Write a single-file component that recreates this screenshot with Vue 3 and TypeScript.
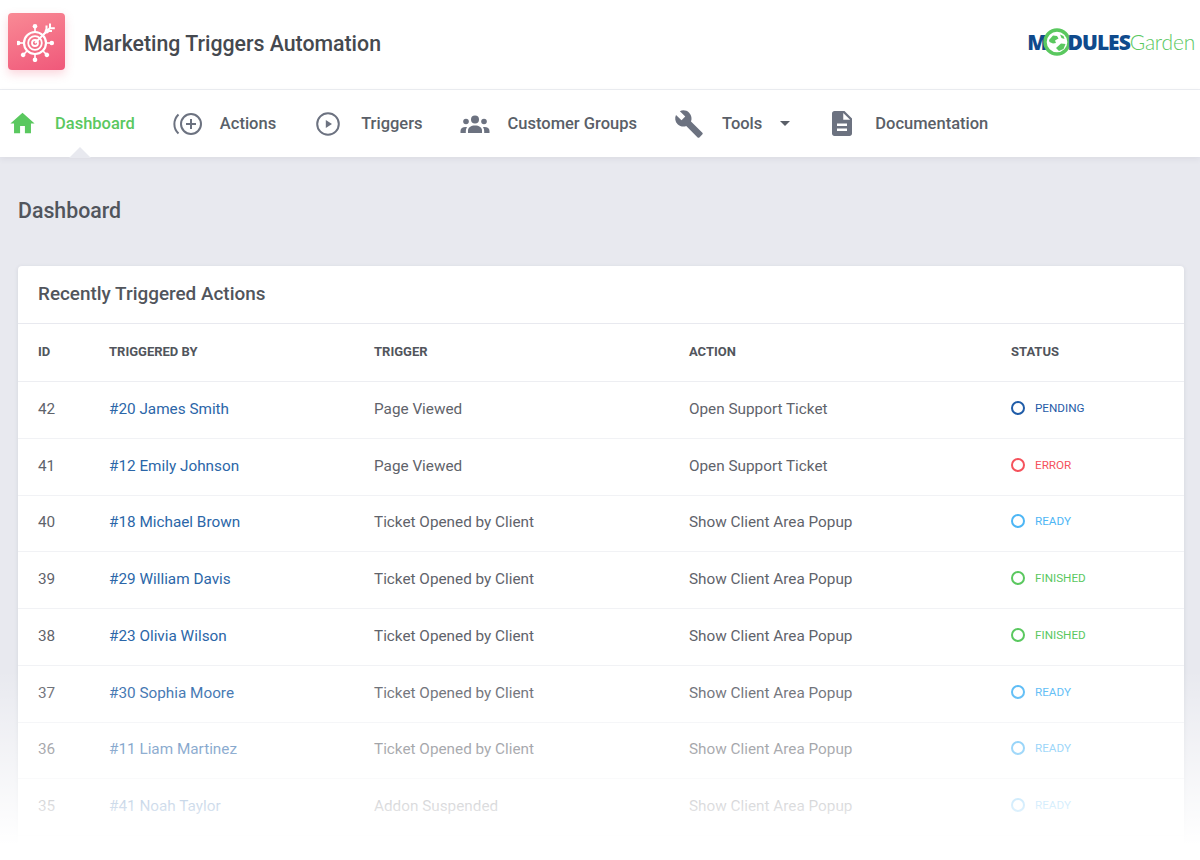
<script setup lang="ts">
interface Row {
  id: number
  by: string
  trigger: string
  action: string
  status: 'pending' | 'error' | 'ready' | 'finished'
}

const menu = [
  { label: 'Dashboard', icon: 'home', active: true },
  { label: 'Actions', icon: 'actions' },
  { label: 'Triggers', icon: 'play' },
  { label: 'Customer Groups', icon: 'groups' },
  { label: 'Tools', icon: 'wrench', caret: true },
  { label: 'Documentation', icon: 'doc' },
]

const rows: Row[] = [
  { id: 42, by: '#20 James Smith', trigger: 'Page Viewed', action: 'Open Support Ticket', status: 'pending' },
  { id: 41, by: '#12 Emily Johnson', trigger: 'Page Viewed', action: 'Open Support Ticket', status: 'error' },
  { id: 40, by: '#18 Michael Brown', trigger: 'Ticket Opened by Client', action: 'Show Client Area Popup', status: 'ready' },
  { id: 39, by: '#29 William Davis', trigger: 'Ticket Opened by Client', action: 'Show Client Area Popup', status: 'finished' },
  { id: 38, by: '#23 Olivia Wilson', trigger: 'Ticket Opened by Client', action: 'Show Client Area Popup', status: 'finished' },
  { id: 37, by: '#30 Sophia Moore', trigger: 'Ticket Opened by Client', action: 'Show Client Area Popup', status: 'ready' },
  { id: 36, by: '#11 Liam Martinez', trigger: 'Ticket Opened by Client', action: 'Show Client Area Popup', status: 'ready' },
  { id: 35, by: '#41 Noah Taylor', trigger: 'Addon Suspended', action: 'Show Client Area Popup', status: 'ready' },
]

// spokes of the target logo, angle in degrees
const spokes = [0, 45, 90, 135, 180, 225, 270]
</script>

<template>
  <div class="page">
    <header class="top">
      <div class="brand">
        <div class="brand-icon">
          <svg viewBox="0 0 40 40" width="40" height="40" fill="none" stroke="#fff">
            <circle cx="18" cy="21" r="11" stroke-width="2.200" />
            <circle cx="18" cy="21" r="6.800" stroke-width="1.800" />
            <circle cx="18" cy="21" r="3" stroke-width="1.800" />
            <g v-for="a in spokes" :key="a" :transform="`rotate(${a} 18 21)`">
              <line x1="18" y1="10" x2="18" y2="5" stroke-width="1.600" />
              <circle cx="18" cy="4.200" r="2.300" fill="#fff" stroke="none" />
            </g>
            <path d="M18 21L33 6" stroke-width="2" />
            <path d="M29.500 3.500v5.500h5.500M33 1.500v4.800h4.800" stroke-width="2" />
          </svg>
        </div>
        <h1>Marketing Triggers Automation</h1>
      </div>
      <div class="mg-logo" aria-label="ModulesGarden">
        <span class="mg-bold">M</span>
        <svg class="mg-globe" viewBox="0 0 28 28" width="28" height="28">
          <circle cx="14" cy="14" r="12" fill="#fff" stroke="#5ac85f" stroke-width="3.400" />
          <path d="M6 12l4-4.500 4 .5 1.500 2.500-3.500 2 1 2.500-3 .5-3.500-1.500zM13 20l5-4.500 4.500 .5-2 5-4.500 2zM17 6.500l3.500 1.500 1 3-3-1z" fill="#5ac85f" />
        </svg>
        <span class="mg-bold">DULES</span><span class="mg-light">Garden</span>
      </div>
    </header>

    <nav class="menu">
      <a v-for="m in menu" :key="m.label" class="menu-item" :class="{ active: m.active }">
        <span class="menu-icon">
          <svg v-if="m.icon === 'home'" viewBox="0 0 24 24" width="29" height="29" fill="#5ac85f">
            <path d="M10 20v-6h4v6h5v-8h3L12 3 2 12h3v8z" />
          </svg>
          <svg v-else-if="m.icon === 'actions'" viewBox="0 0 30 24" width="30" height="24" fill="none" stroke="#6c7280" stroke-width="2">
            <circle cx="19" cy="12" r="10" />
            <path d="M14 12h10M19 7v10" />
            <path d="M6.500 2.500a13 13 0 0 0 0 19" />
          </svg>
          <svg v-else-if="m.icon === 'play'" viewBox="0 0 24 24" width="24" height="24" fill="none" stroke="#6c7280" stroke-width="2">
            <circle cx="12" cy="12" r="10.800" />
            <path d="M9.800 8l6.200 4-6.200 4z" fill="#6c7280" stroke="none" />
          </svg>
          <svg v-else-if="m.icon === 'groups'" viewBox="0 0 30 20" width="30" height="20" fill="#6c7280">
            <circle cx="15" cy="5.500" r="4" />
            <circle cx="6" cy="7.500" r="2.800" />
            <circle cx="24" cy="7.500" r="2.800" />
            <path d="M8 19v-2.500c0-3 3-5 7-5s7 2 7 5V19z" />
            <path d="M.5 19v-2c0-2.500 2-4 5-4 .6 0 1 0 1.500.2-.8 1-1.200 2.300-1.200 3.800v2zM29.500 19v-2c0-2.500-2-4-5-4-.6 0-1 0-1.500.2.800 1 1.200 2.300 1.200 3.800v2z" />
          </svg>
          <svg v-else-if="m.icon === 'wrench'" viewBox="0 0 24 24" width="32" height="32" fill="#6c7280">
            <path d="M22.700 19l-9.100-9.100c.9-2.300.4-5-1.500-6.900-2-2-5-2.400-7.400-1.300L9 6 6 9 1.600 4.700C.4 7.100.9 10.100 2.900 12.100c1.900 1.900 4.600 2.400 6.900 1.500l9.100 9.100c.4.400 1 .4 1.400 0l2.300-2.300c.5-.4.500-1.100.1-1.400z" />
          </svg>
          <svg v-else viewBox="0 0 24 24" width="31" height="31" fill="#6c7280">
            <path d="M14 2H6c-1.100 0-2 .9-2 2v16c0 1.100.9 2 2 2h12c1.100 0 2-.9 2-2V8l-6-6zm2 16H8v-2h8v2zm0-4H8v-2h8v2zm-3-5V3.500L18.500 9H13z" />
          </svg>
        </span>
        <span class="menu-label">{{ m.label }}</span>
        <span v-if="m.caret" class="caret"></span>
      </a>
    </nav>

    <main class="content">
      <h2 class="page-title">Dashboard</h2>
      <section class="card">
        <div class="card-head">Recently Triggered Actions</div>
        <table class="list">
          <thead>
            <tr>
              <th class="c-id">ID</th>
              <th class="c-by">Triggered By</th>
              <th class="c-trigger">Trigger</th>
              <th class="c-action">Action</th>
              <th>Status</th>
            </tr>
          </thead>
          <tbody>
            <tr v-for="r in rows" :key="r.id">
              <td>{{ r.id }}</td>
              <td><a class="link">{{ r.by }}</a></td>
              <td>{{ r.trigger }}</td>
              <td>{{ r.action }}</td>
              <td>
                <span class="status" :class="r.status"><i></i>{{ r.status }}</span>
              </td>
            </tr>
          </tbody>
        </table>
      </section>
    </main>
    <div class="fade"></div>
  </div>
</template>

<style>
body { background: #fff; }
</style>

<style scoped>
.page { position: relative; height: 860px; overflow: hidden; background: #e8e9ef; font-family: Roboto, sans-serif; color: #51555c; }

.top { height: 90px; box-sizing: border-box; background: #fff; border-bottom: 1px solid #eceef2; display: flex; align-items: center; justify-content: space-between; padding: 0 5px 6px 8px; }
.brand { display: flex; align-items: center; gap: 19px; }
.brand-icon { width: 57px; height: 57px; border-radius: 4px; background: linear-gradient(160deg, #f98a95, #f0587a); box-shadow: 0 4px 10px rgba(240, 90, 120, 0.25); display: flex; align-items: center; justify-content: center; }
.brand h1 { margin: 0; padding-top: 4px; font-size: 21.300px; font-weight: 500; color: #45494f; }

.mg-logo { display: flex; align-items: center; font-size: 21px; letter-spacing: -1px; }
.mg-bold { font-family: "Open Sans", sans-serif; font-weight: 800; color: #0f4a8c; }
.mg-light { font-family: Lato, sans-serif; font-weight: 300; color: #5ac85f; font-size: 21px; letter-spacing: -0.2px; }
.mg-globe { margin: 0 -3px 0 -4px; }

.menu { position: relative; height: 67px; background: #fff; display: flex; align-items: center; gap: 37px; padding-left: 7px; box-shadow: 0 2px 6px rgba(60, 65, 90, 0.08); }
.menu-item { position: relative; display: flex; align-items: center; height: 100%; font-size: 16.500px; font-weight: 500; color: #5a5f68; }
.menu-item.active { color: #5ac85f; }
.menu-item.active::after { content: ""; position: absolute; left: 62px; bottom: -1px; border: 11px solid transparent; border-top: 0; border-bottom-color: #e8e9ef; }
.menu-icon { width: 30px; display: flex; justify-content: center; margin-right: 18px; }
.caret { margin-left: 18px; border: 5.500px solid transparent; border-bottom: 0; border-top: 5px solid #5a5f68; }

.content { padding: 0 16px 0 18px; }
.page-title { margin: 0; padding-top: 41px; height: 68px; font-size: 21.300px; font-weight: 500; color: #51555c; line-height: 26px; }
.card { background: #fff; border-radius: 4px; box-shadow: 0 1px 4px rgba(60, 65, 90, 0.12); min-height: 640px; }
.card-head { height: 57px; line-height: 55px; padding-left: 20px; font-size: 18.900px; font-weight: 500; color: #51555c; border-bottom: 1px solid #e8e9ef; }

.list { width: 100%; border-collapse: collapse; table-layout: fixed; font-size: 15.300px; }
.list th { height: 54px; padding: 0 0 3px 20px; text-align: left; font-size: 13px; font-weight: 700; text-transform: uppercase; color: #51555c; }
.list td { height: 53.750px; padding: 0 0 2px 20px; color: #5f636b; }
.list th.c-id { width: 71px; }
.list th.c-by { width: 265px; padding-left: 0; }
.list th.c-trigger { width: 315px; padding-left: 0; }
.list th.c-action { width: 322px; padding-left: 0; }
.list th:last-child { padding-left: 0; }
.list td:not(:first-child) { padding-left: 0; }
.list thead tr { border-bottom: 1px solid #edeef2; }
.list tbody tr { border-bottom: 1px solid #f1f2f5; }
.link { color: #2b66a8; }

.status { display: inline-flex; align-items: center; gap: 10px; font-size: 11.700px; font-weight: 400; text-transform: uppercase; vertical-align: -1px; }
.status i { width: 14px; height: 14px; box-sizing: border-box; border: 2px solid currentColor; border-radius: 50%; }
.status.pending { color: #1f5ca8; }
.status.error { color: #f5525c; }
.status.ready { color: #4db6f5; }
.status.finished { color: #5ac85f; }

.fade { position: absolute; left: 0; right: 0; bottom: 0; height: 190px; background: linear-gradient(to bottom, rgba(255, 255, 255, 0), #fff 92%); pointer-events: none; }
</style>
